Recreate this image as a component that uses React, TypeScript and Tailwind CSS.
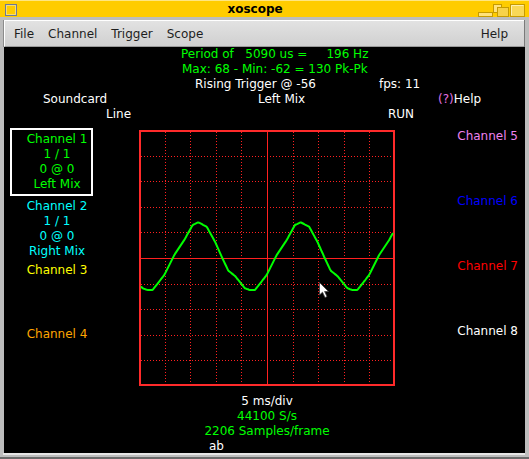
import React from 'react';

// one period of the trace, offsets measured from a peak
const shape: [number, number][] = [
  [0, 92.3], [8.4, 96.7], [16.7, 111.7], [23.4, 126.7], [30, 140.7], [36.7, 146],
  [46.7, 158.3], [51.7, 160], [56.7, 160], [68.4, 145], [78.4, 125], [88.4, 110],
  [96.7, 95], [102.4, 92.3],
];
const PERIOD = 102.4;
const PEAK = 59.3;

function traceY(x: number) {
  let d = (x - PEAK) % PERIOD;
  if (d < 0) d += PERIOD;
  for (let i = 1; i < shape.length; i++) {
    const [x0, y0] = shape[i - 1];
    const [x1, y1] = shape[i];
    if (d <= x1) return y0 + ((y1 - y0) * (d - x0)) / (x1 - x0);
  }
  return shape[0][1];
}

const gridAt = [26, 51, 77, 102, 154, 179, 205, 230];

const Scope: React.FC = () => {
  const pts: string[] = [];
  for (let x = 2; x <= 254; x += 1) pts.push(`${x},${traceY(x).toFixed(1)}`);

  return (
    <div className="relative w-[256px] h-[256px]">
      <svg width="256" height="256" viewBox="0 0 256 256" className="block">
        {gridAt.map((p) => (
          <g key={p} stroke="#ff2020" strokeWidth="1" strokeDasharray="1 2">
            <line x1={p + 0.5} y1="2" x2={p + 0.5} y2="254" />
            <line x1="2" y1={p + 0.5} x2="254" y2={p + 0.5} />
          </g>
        ))}
        <line x1="128.5" y1="1" x2="128.5" y2="255" stroke="#ff2020" strokeWidth="1" />
        <line x1="1" y1="128.5" x2="255" y2="128.5" stroke="#ff2020" strokeWidth="1" />
        <rect x="1" y="1" width="254" height="254" fill="none" stroke="#ff2a2a" strokeWidth="2" />
        <polyline points={pts.join(' ')} fill="none" stroke="#00ff00" strokeWidth="2" strokeLinejoin="round" />
      </svg>
      {/* mouse pointer */}
      <svg width="11" height="17" viewBox="0 0 11 17" className="absolute left-[180px] top-[152px]">
        <path d="M0.5 0.5 L0.5 13 L3.5 10.2 L6 15.5 L8 14.6 L5.6 9.5 L9.5 9.5 Z" fill="#ffffff" stroke="#404040" strokeWidth="0.8" />
      </svg>
    </div>
  );
};

const TitleButtons: React.FC = () => (
  <svg width="50" height="17" viewBox="0 0 50 17" className="block">
    <rect x="1.5" y="11.5" width="14" height="4" fill="#ffe27a" stroke="#c69b00" />
    <rect x="16.5" y="3.5" width="8" height="8" fill="#ffe27a" stroke="#c69b00" />
    <rect x="20.5" y="6.5" width="11" height="9" fill="#f7d24a" stroke="#c69b00" />
    <rect x="33.5" y="3.5" width="14" height="12" fill="#f9d957" stroke="#c69b00" />
    <line x1="34.5" y1="4.5" x2="46.5" y2="4.5" stroke="#fff0b0" />
    <line x1="34.5" y1="4.5" x2="34.5" y2="14.5" stroke="#fff0b0" />
  </svg>
);

const App: React.FC = () => {
  return (
    <div className="w-[529px] h-[459px] bg-[#bdbdbd] flex flex-col overflow-hidden font-['DejaVu_Sans',sans-serif] text-[12px] leading-[15px]">
      {/* title bar */}
      <div className="h-[17px] shrink-0 bg-[#ffcc00] border-t border-[#ffe680] flex items-center">
        <div className="w-[20px] pl-[5px] pt-[1px]">
          <svg width="12" height="12" viewBox="0 0 12 12" className="block">
            <rect x="0.5" y="0.5" width="11" height="11" fill="none" stroke="#6d7898" />
            <rect x="1.5" y="1.5" width="9" height="9" fill="none" stroke="#f2dc7a" />
          </svg>
        </div>
        <div className="flex-1 text-center pl-[13px] pt-[1px] font-bold text-black leading-[15px]">xoscope</div>
        <div className="w-[52px] pr-[2px]">
          <TitleButtons />
        </div>
      </div>

      <div className="flex-1 flex flex-col pt-[3px] pl-[3px] pr-[4px]">
        {/* menu bar */}
        <div className="h-[27px] shrink-0 border-l border-[#8c8c8c] border-r border-r-[#7a7a7a]">
          <div className="h-full bg-gradient-to-b from-[#e2e2e2] to-[#d0d0d0] border-t border-l border-white border-b border-b-[#9a9a9a] flex items-center pt-[2px] pl-[2px] pr-[9px] text-[#1e1e1e]">
            <span className="px-[7px]">File</span>
            <span className="px-[7px]">Channel</span>
            <span className="px-[7px]">Trigger</span>
            <span className="px-[7px]">Scope</span>
            <span className="ml-auto px-[7px]">Help</span>
          </div>
        </div>

        {/* scope area */}
        <div className="h-[406px] shrink-0 ml-[1px] bg-black text-white overflow-hidden">
          <div className="pl-[177px] text-[#00ff00] whitespace-pre">Period of   5090 us =     196 Hz</div>
          <div className="pl-[178px] text-[#00ff00] whitespace-pre">Max: 68 - Min: -62 = 130 Pk-Pk</div>
          <div className="flex pl-[191px] whitespace-pre">
            <span className="w-[184px]">Rising Trigger @ -56</span>
            <span>fps: 11</span>
          </div>
          <div className="flex pl-[39px] whitespace-pre">
            <span className="w-[215px]">Soundcard</span>
            <span className="w-[180px]">Left Mix</span>
            <span><span className="text-[#e070e0]">(?)</span>Help</span>
          </div>
          <div className="flex pl-[102px] whitespace-pre">
            <span className="w-[282px]">Line</span>
            <span>RUN</span>
          </div>

          <div className="flex">
            {/* channels 1-4 */}
            <div className="w-[135px] shrink-0">
              <div className="mt-[6px] ml-[6px] w-[83px] border-2 border-white pt-[2px] pb-[2px] pl-[11px] text-center text-[#00ff00]">
                <div>Channel 1</div>
                <div>1 / 1</div>
                <div>0 @ 0</div>
                <div>Left Mix</div>
              </div>
              <div className="mt-[3px] w-[106px] text-center text-[#00ffff]">
                <div>Channel 2</div>
                <div>1 / 1</div>
                <div>0 @ 0</div>
                <div>Right Mix</div>
              </div>
              <div className="mt-[4px] w-[106px] text-center text-[#ffff00]">Channel 3</div>
              <div className="mt-[49px] w-[106px] text-center text-[#ffa500]">Channel 4</div>
            </div>

            {/* graticule and readouts */}
            <div className="w-[256px] shrink-0">
              <div className="mt-[8px]">
                <Scope />
              </div>
              <div className="mt-[8px] text-center">5 ms/div</div>
              <div className="text-center text-[#00ff00]">44100 S/s</div>
              <div className="text-center text-[#00ff00]">2206 Samples/frame</div>
              <div className="pl-[70px]">ab</div>
            </div>

            {/* channels 5-8 */}
            <div className="flex-1 text-right pr-[7px]">
              <div className="mt-[7px] text-[#ee82ee]">Channel 5</div>
              <div className="mt-[50px] text-[#0000ff]">Channel 6</div>
              <div className="mt-[50px] text-[#ff0000]">Channel 7</div>
              <div className="mt-[50px] text-white">Channel 8</div>
            </div>
          </div>
        </div>

        <div className="flex-1 border-t-2 border-[#e6e6e6]" />
      </div>
      <div className="h-[2px] shrink-0 bg-[#6a6a6a]" />
    </div>
  );
};

export default App;
